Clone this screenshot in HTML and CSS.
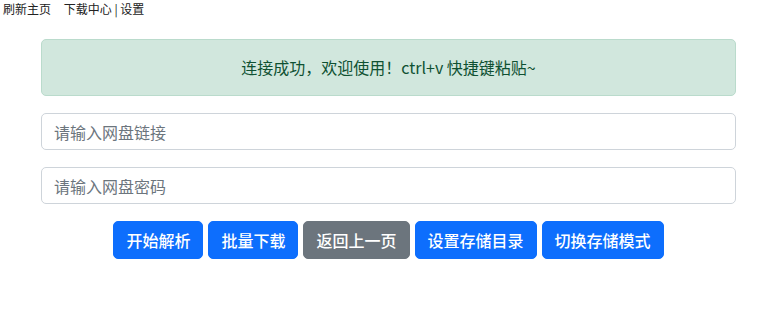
FILE: index.html
```html
<!DOCTYPE html>
<html lang="zh-CN">
<head>
    <meta charset="UTF-8">
    <meta name="viewport" content="width=device-width, initial-scale=1.0">
    <title>网盘下载</title>
    <link rel="stylesheet" href="styles.css">
</head>
<body>
    <div class="nav">
        <a href="#">刷新主页</a>
        <a href="#" class="gap">下载中心</a> | <a href="#">设置</a>
    </div>

    <div class="container">
        <div class="alert">连接成功，欢迎使用！ctrl+v 快捷键粘贴~</div>
        <input type="text" class="field" placeholder="请输入网盘链接">
        <input type="password" class="field" placeholder="请输入网盘密码">
        <div class="actions">
            <button class="btn">开始解析</button>
            <button class="btn">批量下载</button>
            <button class="btn btn-grey">返回上一页</button>
            <button class="btn">设置存储目录</button>
            <button class="btn">切换存储模式</button>
        </div>
    </div>
</body>
</html>
```

FILE: styles.css
```css
body { margin: 0; font-family: "Noto Sans CJK SC", "Liberation Sans", sans-serif; color: #212529; background: #fff; }
.nav { font-size: 12px; line-height: 16px; padding: 1px 3px; color: #222; }
.nav a { color: #222; text-decoration: none; }
.nav .gap { margin-left: 10px; }
.container { width: 695px; margin: 21px 0 0 41px; display: flex; flex-direction: column; gap: 17px; }
.alert { background: #d1e7dd; border: 1px solid #badbcc; color: #0f5132; border-radius: 5px; padding: 16px; font-size: 16px; line-height: 23px; text-align: center; }
.field { box-sizing: border-box; height: 37px; border: 1px solid #ced4da; border-radius: 5px; padding: 6px 12px; font-size: 16px; font-family: inherit; color: #212529; }
.field::placeholder { color: #6c757d; }
.actions { display: flex; justify-content: center; gap: 5px; }
.btn { background: #0d6efd; border: 1px solid #0d6efd; color: #fff; border-radius: 5px; padding: 6px 12px; font-size: 16px; line-height: 24px; font-family: inherit; font-weight: 500; cursor: pointer; }
.btn-grey { background: #6c757d; border-color: #6c757d; }
```
